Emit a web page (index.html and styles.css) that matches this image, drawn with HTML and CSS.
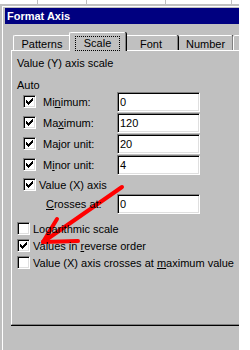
FILE: index.html
```html
<!DOCTYPE html>
<html>
<head>
    <link rel="stylesheet" href="styles.css">
</head>
<body>
    <div class="sheet">
        <div class="dialog">
            <div class="frame">
                <div class="title-bar">Format Axis</div>

                <div class="dialog-body">
                    <div class="tabs">
                        <div class="tab tab-patterns">Patterns</div>
                        <div class="tab tab-scale active"><span class="focus">Scale</span></div>
                        <div class="tab tab-font">Font</div>
                        <div class="tab tab-number">Number</div>
                        <div class="tab tab-align"></div>
                    </div>

                    <div class="panel">
                        <div class="heading">Value (Y) axis scale</div>
                        <div class="group-title">Auto</div>

                        <div class="row">
                            <span class="box checked"><svg width="9" height="9" viewBox="0 0 9 9"><path d="M1 3h1v3h-1zM2 4h1v3h-1zM3 5h1v3h-1zM4 4h1v3h-1zM5 3h1v3h-1zM6 2h1v3h-1zM7 1h1v3h-1z"/></svg></span>
                            <span class="field-label">Mi<u>n</u>imum:</span>
                            <span class="field">0</span>
                        </div>
                        <div class="row">
                            <span class="box checked"><svg width="9" height="9" viewBox="0 0 9 9"><path d="M1 3h1v3h-1zM2 4h1v3h-1zM3 5h1v3h-1zM4 4h1v3h-1zM5 3h1v3h-1zM6 2h1v3h-1zM7 1h1v3h-1z"/></svg></span>
                            <span class="field-label">Ma<u>x</u>imum:</span>
                            <span class="field">120</span>
                        </div>
                        <div class="row">
                            <span class="box checked"><svg width="9" height="9" viewBox="0 0 9 9"><path d="M1 3h1v3h-1zM2 4h1v3h-1zM3 5h1v3h-1zM4 4h1v3h-1zM5 3h1v3h-1zM6 2h1v3h-1zM7 1h1v3h-1z"/></svg></span>
                            <span class="field-label">Ma<u>j</u>or unit:</span>
                            <span class="field">20</span>
                        </div>
                        <div class="row">
                            <span class="box checked"><svg width="9" height="9" viewBox="0 0 9 9"><path d="M1 3h1v3h-1zM2 4h1v3h-1zM3 5h1v3h-1zM4 4h1v3h-1zM5 3h1v3h-1zM6 2h1v3h-1zM7 1h1v3h-1z"/></svg></span>
                            <span class="field-label">M<u>i</u>nor unit:</span>
                            <span class="field">4</span>
                        </div>
                        <div class="row row-short">
                            <span class="box checked"><svg width="9" height="9" viewBox="0 0 9 9"><path d="M1 3h1v3h-1zM2 4h1v3h-1zM3 5h1v3h-1zM4 4h1v3h-1zM5 3h1v3h-1zM6 2h1v3h-1zM7 1h1v3h-1z"/></svg></span>
                            <span class="cb-label">Value (X) axis</span>
                        </div>
                        <div class="row row-cross">
                            <span class="cross-label"><u>C</u>rosses at:</span>
                            <span class="field">0</span>
                        </div>

                        <div class="options">
                            <div class="check-row">
                                <span class="box"></span>
                                <span class="cb-label">Lo<u>g</u>arithmic scale</span>
                            </div>
                            <div class="check-row">
                                <span class="box checked"><svg width="9" height="9" viewBox="0 0 9 9"><path d="M1 3h1v3h-1zM2 4h1v3h-1zM3 5h1v3h-1zM4 4h1v3h-1zM5 3h1v3h-1zM6 2h1v3h-1zM7 1h1v3h-1z"/></svg></span>
                                <span class="cb-label">Values in <u>r</u>everse order</span>
                            </div>
                            <div class="check-row">
                                <span class="box"></span>
                                <span class="cb-label">Value (X) axis crosses at <u>m</u>aximum value</span>
                            </div>
                        </div>
                    </div>
                </div>
            </div>
        </div>

        <!-- red arrow drawn over the screenshot -->
        <svg class="arrow" width="250" height="350" viewBox="0 0 250 350">
            <g stroke="#ff0000" stroke-width="4" stroke-linecap="round" fill="none">
                <path d="M122 187L43 242"/>
                <path d="M43 242L78 241"/>
                <path d="M43 242L57 219"/>
            </g>
        </svg>
    </div>
</body>
</html>
```

FILE: styles.css
```css
body {
    margin: 0;
    font-family: "Liberation Sans", Arial, sans-serif;
    font-size: 11px;
    color: #000;
    background: #fff;
}

.sheet {
    position: relative;
    width: 250px;
    height: 350px;
    overflow: hidden;
    padding-top: 4px;
    box-sizing: border-box;
    background:
        linear-gradient(#c0c0c0, #c0c0c0) 37px 0 / 1px 4px no-repeat,
        linear-gradient(#c0c0c0, #c0c0c0) 86px 0 / 1px 4px no-repeat,
        linear-gradient(#c0c0c0, #c0c0c0) 165px 0 / 1px 4px no-repeat,
        linear-gradient(#c0c0c0, #c0c0c0) 231px 0 / 1px 4px no-repeat,
        #fff;
}

/* dialog window */
.dialog {
    width: 239px;
    height: 346px;
    box-sizing: border-box;
    background: #c0c0c0;
    border-left: 2px solid #c0c0c0;
    border-top: 2px solid #c0c0c0;
    overflow: hidden;
}
.frame {
    height: 100%;
    border-left: 1px solid #fff;
    border-top: 1px solid #fff;
    padding: 1px 0 0 2px;
    box-sizing: border-box;
}

.title-bar {
    height: 16px;
    line-height: 16px;
    background: #000080;
    color: #fff;
    font-weight: bold;
    padding-left: 2px;
    white-space: nowrap;
}

.dialog-body {
    padding: 8px 0 0 6px;
}

/* tabs */
.tabs {
    display: flex;
    align-items: flex-end;
    height: 18px;
    padding-left: 2px;
    position: relative;
    z-index: 2;
    white-space: nowrap;
}
.tab {
    flex: none;
    height: 15px;
    box-sizing: border-box;
    border-top: 1px solid #fff;
    border-left: 1px solid #fff;
    border-right: 1px solid #808080;
    box-shadow: 1px 0 0 #000;
    border-radius: 2px 2px 0 0;
    padding-top: 2px;
    line-height: 13px;
    text-align: center;
    background: #c0c0c0;
}
.tab-patterns { width: 58px; }
.tab-font { width: 54px; }
.tab-number { width: 55px; }
.tab-align { width: 60px; }
.tab.active {
    width: 57px;
    height: 19px;
    margin: 0 -2px -1px -2px;
    padding-top: 4px;
    position: relative;
    z-index: 1;
}
.tab-font { position: relative; z-index: 0; }
.focus {
    display: inline-block;
    padding: 0 8px;
    outline: 1px dotted #000;
}

/* tab page */
.panel {
    width: 240px;
    height: 273px;
    border-top: 1px solid #fff;
    border-left: 1px solid #fff;
    border-bottom: 1px solid #808080;
    box-shadow: 0 1px 0 #000;
    position: relative;
    z-index: 1;
}
.heading {
    margin: 6px 0 0 5px;
    line-height: 13px;
}
.group-title {
    margin: 10px 0 0 5px;
    line-height: 11px;
}

.row {
    display: flex;
    align-items: center;
    height: 21px;
    padding-left: 11px;
}
.row-short { height: 19px; }
.row-cross {
    height: 20px;
    padding-left: 34px;
}

.box {
    flex: none;
    width: 13px;
    height: 13px;
    box-sizing: border-box;
    background: #fff;
    border: 1px solid;
    border-color: #808080 #fff #fff #808080;
    box-shadow: inset 1px 1px #000, inset -1px -1px #dfdfdf;
    padding: 1px;
}
.box svg {
    display: block;
    fill: #000;
}

.field-label {
    width: 74px;
    margin-left: 7px;
    white-space: nowrap;
}
.cross-label {
    width: 71px;
    white-space: nowrap;
}
.cb-label {
    margin-left: 3px;
    white-space: nowrap;
}

.field {
    width: 83px;
    height: 20px;
    box-sizing: border-box;
    background: #fff;
    border: 1px solid;
    border-color: #808080 #fff #fff #808080;
    box-shadow: inset 1px 1px #000, inset -1px -1px #dfdfdf;
    padding-left: 2px;
    line-height: 18px;
}

.options {
    margin-top: 6px;
}
.check-row {
    display: flex;
    align-items: center;
    height: 17px;
    padding-left: 5px;
}

.arrow {
    position: absolute;
    left: 0;
    top: 0;
    pointer-events: none;
}
```
